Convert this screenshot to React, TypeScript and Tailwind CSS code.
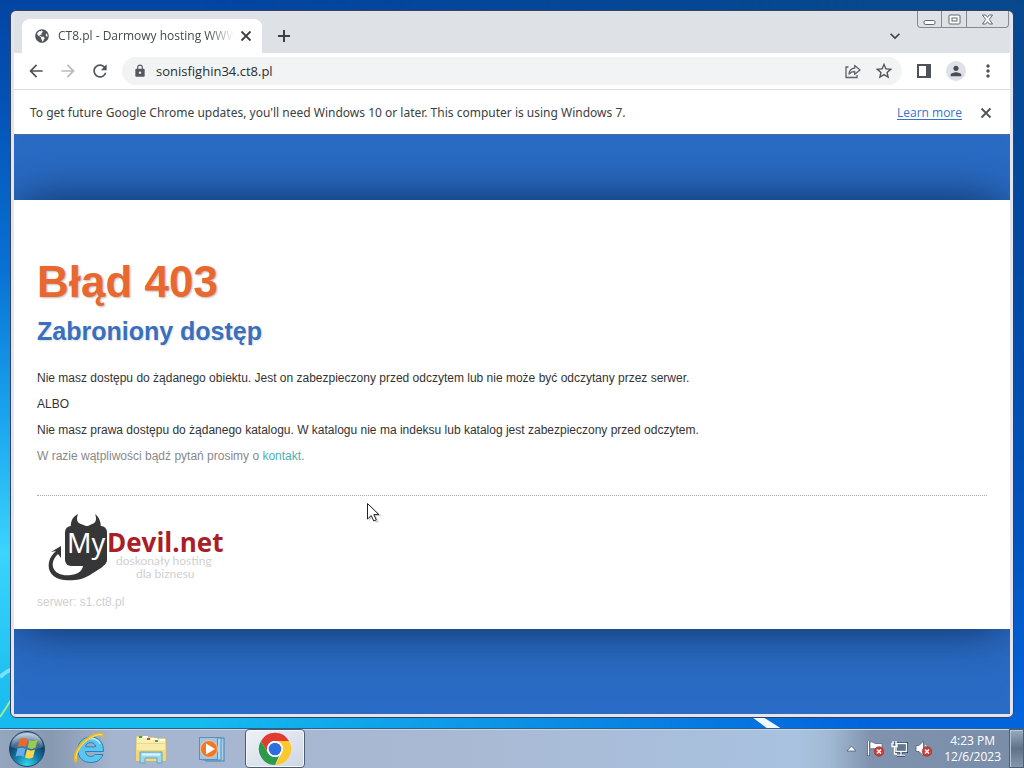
import type { ReactNode } from "react";
import { FaGlobeAmericas } from "react-icons/fa";
import {
  MdArrowBack,
  MdArrowForward,
  MdExpandMore,
  MdLock,
  MdMoreVert,
  MdPerson,
  MdRefresh,
  MdStarBorder,
} from "react-icons/md";

function Wallpaper() {
  return (
    <svg className="absolute inset-0 h-full w-full" viewBox="0 0 1024 768" preserveAspectRatio="none" aria-hidden="true">
      <defs>
        <linearGradient id="wpLeft" x1="0" y1="0" x2="0" y2="1">
          <stop offset="0" stopColor="#0345a2" />
          <stop offset="0.12" stopColor="#0450b4" />
          <stop offset="0.35" stopColor="#0872d4" />
          <stop offset="0.55" stopColor="#1ba6ee" />
          <stop offset="0.72" stopColor="#3ad4fc" />
          <stop offset="0.95" stopColor="#14b9ee" />
        </linearGradient>
        <linearGradient id="wpRight" x1="0" y1="0" x2="0" y2="1">
          <stop offset="0" stopColor="#07488d" />
          <stop offset="0.3" stopColor="#0148a0" />
          <stop offset="0.7" stopColor="#0154bd" />
          <stop offset="0.95" stopColor="#0264dd" />
        </linearGradient>
        <linearGradient id="wpFade" x1="0" y1="0" x2="1" y2="0">
          <stop offset="0.2" stopColor="#000" />
          <stop offset="0.85" stopColor="#fff" />
        </linearGradient>
        <mask id="wpMask">
          <rect width="1024" height="768" fill="url(#wpFade)" />
        </mask>
      </defs>
      <rect width="1024" height="768" fill="url(#wpLeft)" />
      <rect width="1024" height="768" fill="url(#wpRight)" mask="url(#wpMask)" />
      <path d="M0 677 Q5 672 12 669" stroke="#a5ecff" strokeWidth="4" fill="none" opacity="0.7" />
      <path d="M0 717 Q6 708 11 700" stroke="#9cea9a" strokeWidth="2" fill="none" />
      <path d="M752 717 L763 717 L782 729 L768 729 Z" fill="#eef8ff" />
    </svg>
  );
}

function CrossIcon() {
  return (
    <svg width="16" height="16" viewBox="0 0 16 16" stroke="currentColor" strokeWidth="1.8" aria-hidden="true">
      <path d="M3.500 3.500l9 9m0-9l-9 9" />
    </svg>
  );
}

function ShareIcon() {
  return (
    <svg width="18" height="18" viewBox="0 0 18 18" fill="none" stroke="#5f6368" strokeWidth="1.3" aria-hidden="true">
      <path d="M4.500 5H2v10.500h11V13" />
      <path d="M5 12c.4-3.600 2.600-5.600 5.700-5.800V3.500L16 8l-5.300 4.300V9.500C8.200 9.500 6.500 10.300 5 12Z" strokeLinejoin="round" />
    </svg>
  );
}

function TabStrip() {
  return (
    <div className="flex h-[42px] items-start rounded-t-md bg-[#dee1e6] pl-2">
      <div className="mt-2 flex h-[34px] w-60 items-center rounded-t-lg bg-white pl-3 pr-2">
        <FaGlobeAmericas className="ml-px size-3.5 shrink-0 text-[#50555a]" />
        <span className="ml-[9px] flex-1 overflow-hidden whitespace-nowrap text-xs text-[#45494d] [mask-image:linear-gradient(to_right,black_85%,transparent)]">
          CT8.pl - Darmowy hosting WWW
        </span>
        <button aria-label="Close tab" className="ml-1 text-[#3c4043]">
          <CrossIcon />
        </button>
      </div>
      <button aria-label="New tab" className="ml-3 mt-[15px] text-[#3c4043]">
        <svg width="20" height="20" viewBox="0 0 20 20" stroke="currentColor" strokeWidth="2" aria-hidden="true">
          <path d="M10 4v12M4 10h12" />
        </svg>
      </button>
      <div className="flex-1" />
      <button aria-label="Search tabs" className="mr-3 mt-[15px] text-[#3c4043]">
        <MdExpandMore className="size-5" />
      </button>
      <div className="mr-px flex h-[17px] rounded-b border border-t-0 border-[#858990] text-[#63676e]">
        <button aria-label="Minimize" className="flex w-6 items-center justify-center border-r border-[#858990]">
          <svg width="13" height="13" viewBox="0 0 13 13" fill="#fff" stroke="currentColor">
            <rect x="1" y="7.500" width="11" height="4" rx="1.500" />
          </svg>
        </button>
        <button aria-label="Maximize" className="flex w-[25px] items-center justify-center border-r border-[#858990]">
          <svg width="13" height="13" viewBox="0 0 13 13" fill="#fff" stroke="currentColor">
            <rect x="1" y="2" width="11" height="9" rx="1" />
            <rect x="4" y="5" width="5" height="3" />
          </svg>
        </button>
        <button aria-label="Close" className="flex w-[41px] items-center justify-center">
          <svg width="13" height="13" viewBox="0 0 13 13" fill="#fff" stroke="currentColor" strokeLinejoin="round">
            <path d="M1.500 2h3.200l1.800 2.300L8.300 2h3.200L8.300 6.500l3.200 4.500H8.300L6.500 8.700 4.700 11H1.500l3.200-4.500Z" />
          </svg>
        </button>
      </div>
    </div>
  );
}

function Toolbar() {
  return (
    <div className="flex h-[37px] items-center gap-3 border-b border-[#d9dbde] bg-white px-3 text-[#4f5357]">
      <button aria-label="Back">
        <MdArrowBack className="size-5" />
      </button>
      <button aria-label="Forward" className="text-[#b9bbbe]">
        <MdArrowForward className="size-5" />
      </button>
      <button aria-label="Reload">
        <MdRefresh className="size-5" />
      </button>
      <div className="flex h-7 flex-1 items-center rounded-full bg-[#f1f3f4] pl-[11px] pr-2">
        <MdLock className="size-3.5 text-[#55595d]" />
        <input
          aria-label="Address"
          defaultValue="sonisfighin34.ct8.pl"
          className="ml-[9px] min-w-0 flex-1 bg-transparent pt-0.5 text-[13px] text-[#2b2e31] outline-none"
        />
        <button aria-label="Share this page">
          <ShareIcon />
        </button>
        <button aria-label="Bookmark this page" className="ml-3">
          <MdStarBorder className="size-5" />
        </button>
      </div>
      <button aria-label="Side panel" className="flex size-5 items-center justify-center">
        <svg width="14" height="14" viewBox="0 0 14 14" aria-hidden="true">
          <path fill="currentColor" fillRule="evenodd" d="M0 0h14v14H0Zm2 2v10h7V2Z" />
        </svg>
      </button>
      <button aria-label="Profile" className="flex size-5 items-center justify-center rounded-full bg-[#dee1e6] text-[#474c56]">
        <MdPerson className="size-4" />
      </button>
      <button aria-label="Menu">
        <MdMoreVert className="size-5" />
      </button>
    </div>
  );
}

function InfoBar() {
  return (
    <div className="flex h-[45px] items-center border-b border-[#4a6c9b] bg-white px-4 pt-px text-xs text-[#3c4043]">
      <p className="flex-1 font-['Noto_Sans',sans-serif]">
        To get future Google Chrome updates, you'll need Windows 10 or later. This computer is using Windows 7.
      </p>
      <a href="#learn-more" className="text-[#3673cf] underline underline-offset-2">
        Learn more
      </a>
      <button aria-label="Dismiss" className="ml-4 text-[#4f5357]">
        <CrossIcon />
      </button>
    </div>
  );
}

function DevilLogo() {
  return (
    <svg width="190" height="80" viewBox="0 0 190 80" role="img" aria-label="MyDevil.net">
      <g fill="#363638">
        <rect x="25" y="18" width="42" height="40" rx="6" />
        <path d="M31 22C30 14 32 9 38 6C36 11 37 15 41 16L46 18V22Z" />
        <path d="M48 22V18L52 16C56 15 57 11 55 6C60 10 62 16 60 23Z" />
        <path d="M66 50C66 60 58 61 50 67C42 72 32 73 24 72C13 71 7 63 9 54C10 49 13 46 16 43L11 44L21 38L21 50L18 46C14 50 12 54 13 59C15 66 23 68 31 67C39 66 43 62 43 57Z" />
      </g>
      <text x="27" y="45" fontFamily="'Noto Sans', sans-serif" fontSize="27" fill="#fff">
        My
      </text>
      <text x="67" y="44" fontFamily="'Open Sans', sans-serif" fontSize="26" fontWeight="700" fill="#a91e27">
        Devil.net
      </text>
      <g fontFamily="Lato, sans-serif" fontSize="12" fill="#d0d0d0">
        <text x="76" y="57">doskonały hosting</text>
        <text x="96" y="70">dla biznesu</text>
      </g>
    </svg>
  );
}

function ErrorPage() {
  return (
    <main className="relative flex-1 overflow-hidden bg-[#2a6cc5] pt-16 font-['Liberation_Sans',Arial,sans-serif] text-xs text-[#333]">
      <section className="mt-px bg-white px-[23px] pb-[19px] pt-14 shadow-[0_0_50px_-6px_rgba(0,20,50,0.9)]">
        <h1 className="text-[44px] font-bold leading-[52px] text-[#e9682f] [text-shadow:1px_1px_2px_#bbb]">Błąd 403</h1>
        <h2 className="mt-[7px] text-[25px] font-bold leading-8 text-[#3970bd] [text-shadow:1px_1px_2px_#ddd]">
          Zabroniony dostęp
        </h2>
        <div className="mt-[18px] leading-[26px]">
          <p>Nie masz dostępu do żądanego obiektu. Jest on zabezpieczony przed odczytem lub nie może być odczytany przez serwer.</p>
          <p>ALBO</p>
          <p>Nie masz prawa dostępu do żądanego katalogu. W katalogu nie ma indeksu lub katalog jest zabezpieczony przed odczytem.</p>
          <p className="text-[#888]">
            W razie wątpliwości bądź pytań prosimy o{" "}
            <a href="#kontakt" className="text-[#4bb0b4]">
              kontakt
            </a>
            .
          </p>
        </div>
        <footer className="mt-[26px] border-t border-dotted border-[#aaa] pt-3 text-[#d0d0d0]">
          <div className="pl-[3px]">
            <DevilLogo />
          </div>
          <p className="mt-1.5 leading-4">serwer: s1.ct8.pl</p>
        </footer>
      </section>
      <svg className="absolute left-[353px] top-[367px]" width="16" height="22" viewBox="0 0 16 22" aria-hidden="true">
        <path d="M2 3v16l4-4 3 6 3-1-3-6h6Z" fill="#999" opacity="0.4" />
        <path d="M.5 1.500v15.500l3.700-3.500 2.600 5.500 2.500-1.100-2.500-5.300h5.100Z" fill="#fff" stroke="#222" />
      </svg>
    </main>
  );
}

function StartOrb() {
  return (
    <svg width="38" height="38" viewBox="0 0 38 38" aria-hidden="true">
      <defs>
        <radialGradient id="orb" cx="0.5" cy="0.95" r="0.9">
          <stop offset="0" stopColor="#35d5ee" />
          <stop offset="0.4" stopColor="#137ca8" />
          <stop offset="0.75" stopColor="#123f68" />
          <stop offset="1" stopColor="#6c94b4" />
        </radialGradient>
        <linearGradient id="orbGloss" x1="0" y1="0" x2="0" y2="1">
          <stop offset="0" stopColor="#fff" stopOpacity="0.6" />
          <stop offset="1" stopColor="#fff" stopOpacity="0.1" />
        </linearGradient>
      </defs>
      <circle cx="19" cy="19" r="17.500" fill="url(#orb)" stroke="#24466a" />
      <path d="M3 17C4 7 11 3 19 3s15 4 16 14c-9 4-22 4-32 0Z" fill="url(#orbGloss)" />
      <path d="M12 9c3-1.500 5-1.300 8 .2l-2 8c-3-1.500-5-1.500-8-.2Z" fill="#ed6830" />
      <path d="M21.500 10c3 1.300 5 1.300 8-.2l-2 8c-3 1.500-5 1.500-8 0Z" fill="#9bcb4d" />
      <path d="M9.500 18.600c3-1.300 5-1.200 8 .2l-2 8c-3-1.400-5-1.400-8-.1Z" fill="#65aee5" />
      <path d="M19 19.500c3 1.400 5 1.400 8 0l-2 8c-3 1.500-5 1.400-8 0Z" fill="#ffd550" />
    </svg>
  );
}

function ExplorerE() {
  return (
    <svg width="32" height="32" viewBox="0 0 32 32" aria-hidden="true">
      <path
        d="M29.500 18.500H11.500c.3 3.200 2.300 5 5.200 5 2 0 3.300-.7 4.200-2h8c-1.500 5-6 8-12 8C9 29.500 3.800 24.500 3.800 17S9 4 16.700 4c8 0 13 5.200 12.800 14.500Zm-18-4.700h10.200c-.5-2.700-2.200-4.200-5-4.200-2.900 0-4.700 1.500-5.200 4.200Z"
        fill="#5ac5ee"
        stroke="#2582bd"
        strokeWidth="1"
      />
      <path d="M7.500 12c2-4 5-6.500 9-6.500 4.500 0 8 2 9.600 5.500" stroke="#bcecfb" strokeWidth="1.500" fill="none" />
      <path d="M2 28C-1 22 6 10 15 5c7-4.500 13-5 14-2" fill="none" stroke="#e9b923" strokeWidth="3" strokeLinecap="round" />
      <path d="M2 26C1 20 8 9 17 4.500c5-2.700 9-3.500 11-2.500" fill="none" stroke="#ffe57a" strokeWidth="1" />
    </svg>
  );
}

function Folder() {
  return (
    <svg width="34" height="32" viewBox="0 0 34 32" aria-hidden="true">
      <path d="M2 3h8l1 1h9l1 1h11v23H2Z" fill="#f7efb9" stroke="#c9b069" />
      <path d="M5 3h3v2H5Z" fill="#36a846" />
      <path d="M13 5h3v2h-3Z" fill="#d64b34" />
      <path d="M21 7h3v2h-3Z" fill="#4f9d73" />
      <path d="M9 4h5m3 2h6m3 1h5" stroke="#fff" strokeWidth="2" />
      <path d="M2 10h30v17a1 1 0 0 1-1 1H3a1 1 0 0 1-1-1Z" fill="#f2d978" />
      <path d="M3 11h28v6H3Z" fill="#f9ebaa" />
      <path d="M6 19h22v11h-5v-5H11v5H6Z" fill="#9fd7ed" stroke="#5da6ca" />
      <path d="M8 21.500h18" stroke="#dff8ff" strokeWidth="2" />
    </svg>
  );
}

function MediaPlayer() {
  return (
    <svg width="28" height="28" viewBox="0 0 28 28" aria-hidden="true">
      <rect x="8" y="3" width="18" height="23" fill="#a7d0ea" stroke="#3e83b1" />
      <rect x="5" y="3" width="18" height="22" fill="#b7d9ef" stroke="#4e8dba" />
      <rect x="1.500" y="2.500" width="18" height="22" fill="#9fc6e5" stroke="#5892bc" />
      <circle cx="11" cy="14" r="8.500" fill="#ef7929" stroke="#f6c39b" />
      <path d="M8 8.500v11l9-5.500Z" fill="#fff" />
    </svg>
  );
}

function ChromeIcon() {
  return (
    <svg width="34" height="34" viewBox="0 0 34 34" aria-hidden="true">
      <path d="M17 17V9H31A16 16 0 0 1 17 33L24 21Z" fill="#fbc82d" />
      <path d="M3 9A16 16 0 0 1 31 9H17A8 8 0 0 0 10 21Z" fill="#e13c30" />
      <path d="M3 9L10 21A8 8 0 0 0 21 24L17 33A16 16 0 0 1 3 9Z" fill="#2d9a4b" />
      <circle cx="17" cy="17" r="8" fill="#fff" />
      <circle cx="17" cy="17" r="6.300" fill="#2c6fe0" />
    </svg>
  );
}

function ErrorBadge() {
  return (
    <g>
      <circle cx="12" cy="11.500" r="4.800" fill="#d23b32" stroke="#a62826" strokeWidth="0.600" />
      <path d="M10 9.500l4 4m0-4l-4 4" stroke="#fff" strokeWidth="1.600" />
    </g>
  );
}

function TrayButton({ label, children }: { label: string; children: ReactNode }) {
  return (
    <button aria-label={label} className="flex w-6 items-center justify-center">
      <svg width="17" height="17" viewBox="0 0 17 17" fill="none" aria-hidden="true">
        {children}
      </svg>
    </button>
  );
}

function Taskbar() {
  return (
    <footer className="relative flex h-10 items-stretch border-t border-[#2e6189] bg-[linear-gradient(to_right,#94a7bf_0,#8798b1_5%,#a5b5cf_11%,#a9b9d4_45%,#a8c2df_78%,#a1b9d4_81%,#8093ae_85%,#788da8_100%)] shadow-[inset_0_1px_0_#c7d7e7]">
      <button aria-label="Start" className="ml-2 mr-6 flex items-center">
        <StartOrb />
      </button>
      <button aria-label="Internet Explorer" className="flex w-10 items-center justify-center">
        <ExplorerE />
      </button>
      <button aria-label="Windows Explorer" className="ml-[21px] flex w-10 items-center justify-center">
        <Folder />
      </button>
      <button aria-label="Media Player" className="ml-[21px] flex w-10 items-center justify-center">
        <MediaPlayer />
      </button>
      <button
        aria-label="Google Chrome"
        className="ml-[13px] flex w-[60px] items-center justify-center rounded-sm border border-[#4b5d73] bg-linear-to-br from-[#eef2f7] to-[#cfd7e4] shadow-[inset_0_0_0_1px_#f4f7fb]"
      >
        <ChromeIcon />
      </button>
      <div className="flex-1" />
      <TrayButton label="Show hidden icons">
        <path d="M4 11l4.500-5 4.500 5Z" fill="#fff" stroke="#4c5f79" strokeWidth="0.800" />
      </TrayButton>
      <TrayButton label="Action Center">
        <path d="M1.500 1v15" stroke="#34475f" strokeWidth="3" />
        <path d="M1.500 1v14.500" stroke="#fff" strokeWidth="1.500" />
        <path d="M3 2c3-1 4 2 6 1.500h6v6c-4 1-5-2-12-.5Z" fill="#fff" stroke="#4d6078" strokeWidth="0.700" />
        <ErrorBadge />
      </TrayButton>
      <TrayButton label="Network">
        <path d="M5 3.500h10.500v8H5Zm5 8V15m-4 .2h8" stroke="#33465f" strokeWidth="3" />
        <rect x="5" y="3.500" width="10.500" height="8" fill="#60788f" stroke="#fff" strokeWidth="1.300" />
        <path d="M10 12v3m-4 .2h8M1 3v3.500h5V3M3.500 7v7H6M2 1v3m3-3v3" stroke="#fff" strokeWidth="1.300" />
      </TrayButton>
      <TrayButton label="Volume">
        <path d="M1 5.500h3L8.500 1v15L4 11.500H1Z" fill="#fff" stroke="#4d6078" strokeWidth="0.800" />
        <path d="M10.500 5c1 2 1 5 0 7" stroke="#fff" />
        <ErrorBadge />
      </TrayButton>
      <button className="ml-[9px] mr-2 flex flex-col justify-center text-center text-xs leading-4 text-white">
        <time>4:23 PM</time>
        <time>12/6/2023</time>
      </button>
      <button
        aria-label="Show desktop"
        className="w-[15px] border border-[#4e6078] bg-linear-to-b from-[#9babbf] via-[#5e7289] to-[#8697ab] shadow-[inset_1px_1px_0_#b9c5d3]"
      />
    </footer>
  );
}

export default function App() {
  return (
    <div className="relative flex min-h-screen flex-col font-['Open_Sans',sans-serif]">
      <Wallpaper />
      <div className="relative flex flex-1 flex-col px-2.5 pb-2.5 pt-2.5">
        <div className="flex flex-1 flex-col rounded-md border border-[#31435d] bg-[#e4e4ee] px-[3px] pb-[3px]">
          <TabStrip />
          <Toolbar />
          <InfoBar />
          <ErrorPage />
        </div>
      </div>
      <Taskbar />
    </div>
  );
}
